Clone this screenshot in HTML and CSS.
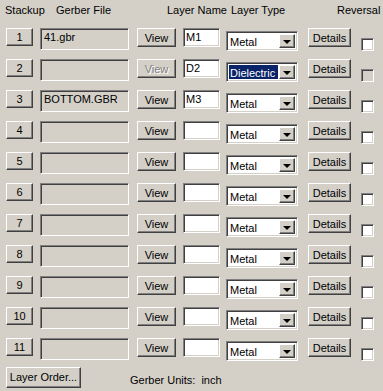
FILE: index.html
```html
<!DOCTYPE html>
<html>
<head>
<meta charset="utf-8">
<link rel="stylesheet" href="styles.css">
</head>
<body>
<div class="dlg">
  <div class="hdr">
    <span class="h-stack">Stackup</span>
    <span class="h-file">Gerber File</span>
    <span class="h-name">Layer Name</span>
    <span class="h-type">Layer Type</span>
    <span class="h-rev">Reversal</span>
  </div>
  <div class="rows">
    <div class="row"><div class="btn num">1</div><div class="file">41.gbr</div><div class="btn view">View</div><div class="name">M1</div><div class="sel"><span class="val">Metal</span><span class="drop"><i></i></span></div><div class="btn det">Details</div><div class="cb"></div></div>
    <div class="row"><div class="btn num">2</div><div class="file"></div><div class="btn view dis">View</div><div class="name">D2</div><div class="sel"><span class="val hl">Dielectric</span><span class="drop"><i></i></span></div><div class="btn det">Details</div><div class="cb off"></div></div>
    <div class="row"><div class="btn num">3</div><div class="file">BOTTOM.GBR</div><div class="btn view">View</div><div class="name">M3</div><div class="sel"><span class="val">Metal</span><span class="drop"><i></i></span></div><div class="btn det">Details</div><div class="cb"></div></div>
    <div class="row"><div class="btn num">4</div><div class="file"></div><div class="btn view">View</div><div class="name"></div><div class="sel"><span class="val">Metal</span><span class="drop"><i></i></span></div><div class="btn det">Details</div><div class="cb"></div></div>
    <div class="row"><div class="btn num">5</div><div class="file"></div><div class="btn view">View</div><div class="name"></div><div class="sel"><span class="val">Metal</span><span class="drop"><i></i></span></div><div class="btn det">Details</div><div class="cb"></div></div>
    <div class="row"><div class="btn num">6</div><div class="file"></div><div class="btn view">View</div><div class="name"></div><div class="sel"><span class="val">Metal</span><span class="drop"><i></i></span></div><div class="btn det">Details</div><div class="cb"></div></div>
    <div class="row"><div class="btn num">7</div><div class="file"></div><div class="btn view">View</div><div class="name"></div><div class="sel"><span class="val">Metal</span><span class="drop"><i></i></span></div><div class="btn det">Details</div><div class="cb"></div></div>
    <div class="row"><div class="btn num">8</div><div class="file"></div><div class="btn view">View</div><div class="name"></div><div class="sel"><span class="val">Metal</span><span class="drop"><i></i></span></div><div class="btn det">Details</div><div class="cb"></div></div>
    <div class="row"><div class="btn num">9</div><div class="file"></div><div class="btn view">View</div><div class="name"></div><div class="sel"><span class="val">Metal</span><span class="drop"><i></i></span></div><div class="btn det">Details</div><div class="cb"></div></div>
    <div class="row"><div class="btn num">10</div><div class="file"></div><div class="btn view">View</div><div class="name"></div><div class="sel"><span class="val">Metal</span><span class="drop"><i></i></span></div><div class="btn det">Details</div><div class="cb"></div></div>
    <div class="row"><div class="btn num">11</div><div class="file"></div><div class="btn view">View</div><div class="name"></div><div class="sel"><span class="val">Metal</span><span class="drop"><i></i></span></div><div class="btn det">Details</div><div class="cb"></div></div>
  </div>
  <div class="foot">
    <div class="btn order">Layer Order...</div>
    <span class="units-label">Gerber Units:</span>
    <span class="units">inch</span>
  </div>
</div>
</body>
</html>
```
FILE: styles.css
```css
html, body {
  margin: 0;
  padding: 0;
  background: #d4d0c8;
}
.dlg {
  width: 383px;
  height: 391px;
  background: #d4d0c8;
  font-family: "Liberation Sans", Arial, sans-serif;
  font-size: 11px;
  color: #000;
  overflow: hidden;
}
.hdr {
  display: flex;
  height: 28px;
  box-sizing: border-box;
  padding: 4px 0 0 5px;
  line-height: 13px;
  white-space: nowrap;
}
.h-stack { width: 51px; }
.h-file { width: 111px; }
.h-name { width: 64px; }
.h-type { width: 106px; }

.rows {
  display: grid;
  grid-template-rows: repeat(10, 31px) 28px;
}
.row {
  display: flex;
  align-items: flex-start;
  padding-left: 6px;
}
.btn {
  box-sizing: border-box;
  border: 1px solid;
  border-color: #fff #404040 #404040 #fff;
  box-shadow: inset -1px -1px #808080, inset 1px 1px #d4d0c8;
  background: #d4d0c8;
  display: flex;
  align-items: center;
  justify-content: center;
  white-space: nowrap;
}
.num {
  width: 27px;
  height: 18px;
}
.file {
  box-sizing: border-box;
  width: 89px;
  height: 22px;
  margin-left: 7px;
  border: 1px solid;
  border-color: #808080 #fff #fff #808080;
  box-shadow: inset 1px 1px #404040, inset -1px -1px #d4d0c8;
  padding: 2px 0 0 3px;
  line-height: 13px;
  white-space: nowrap;
}
.view {
  width: 39px;
  height: 19px;
  margin-left: 8px;
}
.dis {
  color: #808080;
  text-shadow: 1px 1px 0 #fff;
}
.name {
  box-sizing: border-box;
  width: 37px;
  height: 19px;
  margin-left: 7px;
  border: 1px solid;
  border-color: #808080 #fff #fff #808080;
  box-shadow: inset 1px 1px #404040, inset -1px -1px #d4d0c8;
  background: #fff;
  padding: 2px 0 0 2px;
  line-height: 12px;
}
.sel {
  box-sizing: border-box;
  width: 72px;
  height: 20px;
  margin-left: 6px;
  margin-top: 3px;
  border: 1px solid;
  border-color: #808080 #fff #fff #808080;
  box-shadow: inset 1px 1px #404040, inset -1px -1px #d4d0c8;
  background: #fff;
  padding: 2px;
  display: flex;
  align-items: stretch;
}
.val {
  flex: 1;
  line-height: 17px;
  padding-left: 1px;
  margin-right: 1px;
  white-space: nowrap;
  overflow: hidden;
}
.hl {
  background: #0a246a;
  color: #fff;
}
.drop {
  box-sizing: border-box;
  width: 16px;
  border: 1px solid;
  border-color: #fff #404040 #404040 #fff;
  box-shadow: inset -1px -1px #808080, inset 1px 1px #d4d0c8;
  background: #d4d0c8;
  display: flex;
  align-items: center;
  justify-content: center;
}
.drop i {
  width: 0;
  height: 0;
  border-left: 4px solid transparent;
  border-right: 4px solid transparent;
  border-top: 4px solid #000;
  margin-top: 1px;
}
.det {
  width: 43px;
  height: 19px;
  margin-left: 10px;
}
.cb {
  box-sizing: border-box;
  width: 13px;
  height: 13px;
  margin-left: 10px;
  margin-top: 10px;
  border: 1px solid;
  border-color: #808080 #fff #fff #808080;
  box-shadow: inset 1px 1px #404040, inset -1px -1px #d4d0c8;
  background: #fff;
}
.cb.off {
  background: #d4d0c8;
}
.foot {
  display: flex;
  align-items: center;
  padding-left: 6px;
  height: 22px;
}
.order {
  width: 75px;
  height: 21px;
}
.units-label {
  margin-left: 49px;
  margin-top: 6px;
}
.units {
  margin-left: 6px;
  margin-top: 6px;
}
```
